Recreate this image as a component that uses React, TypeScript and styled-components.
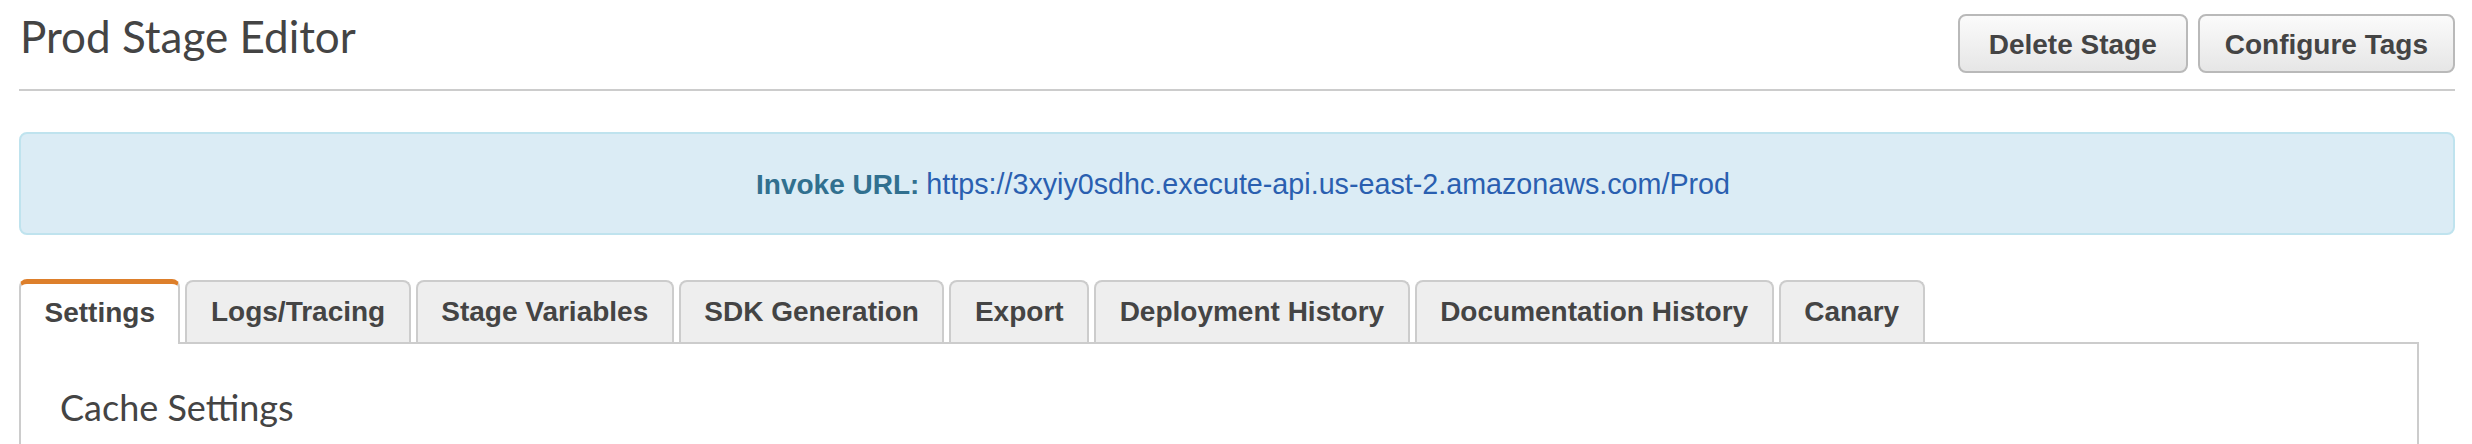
import React, { useState } from "react";
import styled, { createGlobalStyle } from "styled-components";

const GlobalStyle = createGlobalStyle`
  html, body {
    margin: 0;
    padding: 0;
    background: #ffffff;
  }
  body {
    font-family: "Liberation Sans", Arial, Helvetica, sans-serif;
    color: #444444;
    overflow: hidden;
  }
  * { box-sizing: border-box; }
`;

const Page = styled.div`
  display: flex;
  flex-direction: column;
  padding: 0 17px 0 19px;
  min-height: 444px;
`;

const Header = styled.header`
  display: flex;
  justify-content: space-between;
  align-items: flex-start;
  height: 91px;
  border-bottom: 2px solid #cccccc;
`;

const Title = styled.h1`
  margin: 11px 0 0 1px;
  font-family: Lato, "Open Sans", sans-serif;
  font-weight: 400;
  font-size: 44px;
  line-height: 50px;
  color: #444444;
`;

const Actions = styled.div`
  display: flex;
  gap: 10px;
  padding-top: 14px;
`;

const Button = styled.button<{ $pad: number }>`
  height: 59px;
  padding: 2px ${(p) => p.$pad}px 0;
  border: 2px solid #b9b9b9;
  border-radius: 8px;
  background: linear-gradient(#fbfbfb, #e6e6e6);
  font-family: "Liberation Sans", Arial, Helvetica, sans-serif;
  font-weight: 700;
  font-size: 28px;
  color: #444444;
  cursor: pointer;
`;

const InfoBox = styled.div`
  margin-top: 41px;
  height: 103px;
  display: flex;
  align-items: center;
  justify-content: center;
  padding: 2px 0 0 12px;
  background: #dbecf5;
  border: 2px solid #bfe3ee;
  border-radius: 8px;
  font-size: 28px;
`;

const InfoLabel = styled.strong`
  color: #31708f;
  font-weight: 700;
  margin-right: 7px;
`;

const InfoLink = styled.a`
  color: #2a5fb0;
  font-size: 28.7px;
  text-decoration: none;
`;

const TabsArea = styled.div`
  margin-top: 44px;
  margin-right: 36px;
  display: flex;
  flex-direction: column;
  flex: 1;
`;

const TabList = styled.div`
  display: flex;
  gap: 5px;
  align-items: flex-end;
`;

const Tab = styled.button<{ $active?: boolean }>`
  position: relative;
  z-index: ${(p) => (p.$active ? 1 : 0)};
  height: ${(p) => (p.$active ? 65 : 62)}px;
  margin-bottom: ${(p) => (p.$active ? -2 : 0)}px;
  padding: ${(p) => (p.$active ? "0 23.5px 3px" : "0 23.5px")};
  border: 2px solid #cccccc;
  border-top: ${(p) => (p.$active ? "5px solid #dd7f2b" : "2px solid #cccccc")};
  border-bottom: none;
  border-radius: 8px 8px 0 0;
  background: ${(p) => (p.$active ? "#ffffff" : "#eeeeee")};
  font-family: "Liberation Sans", Arial, Helvetica, sans-serif;
  font-weight: 700;
  font-size: 28px;
  color: #444444;
  cursor: pointer;
`;

const Panel = styled.section`
  flex: 1;
  min-height: 160px;
  border: 2px solid #cccccc;
  border-bottom: none;
  padding: 42px 39px 0;
`;

const SectionTitle = styled.h3`
  margin: 0;
  font-family: Lato, "Open Sans", sans-serif;
  font-weight: 400;
  font-size: 36px;
  line-height: 43px;
  color: #444444;
`;

const tabs = [
  "Settings",
  "Logs/Tracing",
  "Stage Variables",
  "SDK Generation",
  "Export",
  "Deployment History",
  "Documentation History",
  "Canary",
];

export default function App() {
  const [active, setActive] = useState(0);
  return (
    <>
      <GlobalStyle />
      <Page>
        <Header>
          <Title>Prod Stage Editor</Title>
          <Actions>
            <Button $pad={29}>Delete Stage</Button>
            <Button $pad={25}>Configure Tags</Button>
          </Actions>
        </Header>
        <InfoBox>
          <InfoLabel>Invoke URL:</InfoLabel>
          <InfoLink href="#">
            https://3xyiy0sdhc.execute-api.us-east-2.amazonaws.com/Prod
          </InfoLink>
        </InfoBox>
        <TabsArea>
          <TabList>
            {tabs.map((t, i) => (
              <Tab key={t} $active={i === active} onClick={() => setActive(i)}>
                {t}
              </Tab>
            ))}
          </TabList>
          <Panel>
            <SectionTitle>Cache Settings</SectionTitle>
          </Panel>
        </TabsArea>
      </Page>
    </>
  );
}
